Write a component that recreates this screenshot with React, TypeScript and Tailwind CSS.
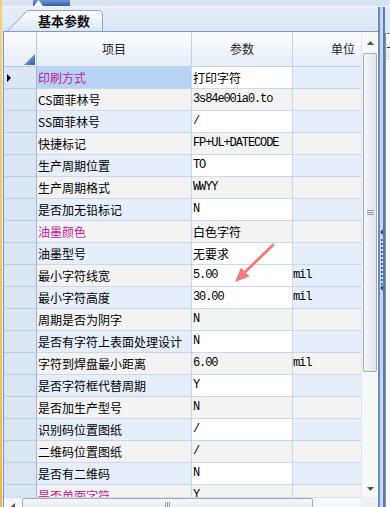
import React from 'react';

type Row = {
  name: string;
  value: string;
  unit?: string;
  mono?: boolean;
  pink?: boolean;
};

const rows: Row[] = [
  { name: '印刷方式', value: '打印字符', pink: true },
  { name: 'CS面菲林号', value: '3s84e00ia0.to', mono: true },
  { name: 'SS面菲林号', value: '/', mono: true },
  { name: '快捷标记', value: 'FP+UL+DATECODE', mono: true },
  { name: '生产周期位置', value: 'TO', mono: true },
  { name: '生产周期格式', value: 'WWYY', mono: true },
  { name: '是否加无铅标记', value: 'N', mono: true },
  { name: '油墨颜色', value: '白色字符', pink: true },
  { name: '油墨型号', value: '无要求' },
  { name: '最小字符线宽', value: '5.00', unit: 'mil', mono: true },
  { name: '最小字符高度', value: '30.00', unit: 'mil', mono: true },
  { name: '周期是否为阴字', value: 'N', mono: true },
  { name: '是否有字符上表面处理设计', value: 'N', mono: true },
  { name: '字符到焊盘最小距离', value: '6.00', unit: 'mil', mono: true },
  { name: '是否字符框代替周期', value: 'Y', mono: true },
  { name: '是否加生产型号', value: 'N', mono: true },
  { name: '识别码位置图纸', value: '/', mono: true },
  { name: '二维码位置图纸', value: '/', mono: true },
  { name: '是否有二维码', value: 'N', mono: true },
  { name: '是否单面字符', value: 'Y', mono: true, pink: true },
];

const cjk = "font-['Noto_Sans_CJK_SC',sans-serif] text-[12px]";
const mono = "font-['Liberation_Mono',monospace] text-[12px] tracking-[-1.1px]";

function GridRow({ row, index }: { row: Row; index: number }) {
  const blue = index % 2 === 0;
  // param cells are white on the blue rows (and on the two width/height rows)
  const paramWhite = blue || index === 9;
  const nameBg = index === 0 ? 'bg-[#b6d3f4]' : blue ? 'bg-[#e6eefa]' : 'bg-[#f3f3f3]';
  const unitBg = blue || index === 9 ? 'bg-[#e6eefa]' : 'bg-[#f3f3f3]';

  return (
    <div className="flex h-[22px] shrink-0">
      <div className="w-[33px] shrink-0 flex items-center pl-[3px] bg-[#dbe5f3] border-r border-b border-r-[#9fb6d9] border-b-[#bccde6]">
        {index === 0 && (
          <svg width="4" height="8" viewBox="0 0 4 8">
            <polygon points="0,0 4,4 0,8" fill="#000" />
          </svg>
        )}
      </div>
      <div
        className={`w-[155px] shrink-0 pl-[1px] leading-[21px] whitespace-nowrap overflow-hidden border-r border-b border-[#c9d8ee] ${cjk} ${nameBg} ${
          row.pink ? 'text-[#c21a9c]' : 'text-black'
        }`}
      >
        {row.name}
      </div>
      <div
        className={`w-[101px] shrink-0 pl-[1px] leading-[21px] whitespace-nowrap overflow-hidden border-r border-b border-[#c9d8ee] text-black ${
          row.mono ? mono : cjk
        } ${paramWhite ? 'bg-white' : 'bg-[#f3f3f3]'}`}
      >
        {row.value}
      </div>
      <div
        className={`w-[100px] shrink-0 leading-[21px] whitespace-nowrap border-b border-[#c9d8ee] text-black ${mono} ${unitBg}`}
      >
        {row.unit}
      </div>
    </div>
  );
}

export default function App() {
  return (
    <div className="relative w-[390px] h-[507px] overflow-hidden flex bg-[#dfe8f5]">
      {/* orange edge of the host window */}
      <div className="w-[2px] shrink-0 bg-gradient-to-b from-[#f7d27a] to-[#efb949]" />

      <div className="flex-1 flex flex-col min-w-0">
        {/* top strip */}
        <div className="h-[7px] shrink-0 flex bg-[#d8e3f1] border-b border-[#eef3fa]">
          <div className="ml-[31px] w-[37px] h-[6px] bg-gradient-to-b from-[#6d96d0] to-[#2f5ea8] flex pl-[1px]">
            <svg width="10" height="6" viewBox="0 0 10 6">
              <polygon points="0,6 4.5,0 9,6" fill="#ffffff" />
            </svg>
          </div>
        </div>

        <div className="flex-1 flex min-h-0">
          {/* main grid side */}
          <div className="w-[376px] shrink-0 flex flex-col">
            {/* tab strip */}
            <div className="h-[24px] shrink-0 flex items-end pl-[5px] bg-gradient-to-b from-[#e7eef8] to-[#dce6f4]">
              <div className="relative w-[96px] h-[21px] flex items-center pl-[31px]">
                <svg className="absolute inset-0" width="96" height="21" viewBox="0 0 96 21">
                  <defs>
                    <linearGradient id="tabg" x1="0" y1="0" x2="0" y2="1">
                      <stop offset="0" stopColor="#ffffff" />
                      <stop offset="1" stopColor="#dbe6f4" />
                    </linearGradient>
                  </defs>
                  <path d="M0.5 21 L20.5 0.5 H91 Q95.5 0.5 95.5 5 V21" fill="url(#tabg)" stroke="#8aa5cc" />
                </svg>
                <span className="relative font-['Noto_Sans_CJK_SC',sans-serif] text-[13px] font-bold leading-none text-[#111]">
                  基本参数
                </span>
              </div>
            </div>

            {/* grid */}
            <div className="ml-[1px] flex-1 flex flex-col border-l border-t border-[#7f9cc8] bg-white">
              <div className="h-[465px] shrink-0 flex">
                <div className="w-[357px] shrink-0 flex flex-col overflow-hidden">
                  {/* header */}
                  <div className="h-[35px] shrink-0 flex bg-gradient-to-b from-[#fbfcfe] to-[#e6edf7]">
                    <div className="w-[33px] shrink-0 flex items-end justify-end pr-[1px] pb-[1px] border-r border-b border-[#b4c8e4]">
                      <svg width="11" height="11" viewBox="0 0 11 11">
                        <defs>
                          <linearGradient id="cg" x1="0" y1="0" x2="1" y2="1">
                            <stop offset="0" stopColor="#8fb2e2" />
                            <stop offset="1" stopColor="#2f62b2" />
                          </linearGradient>
                        </defs>
                        <polygon points="11,0 11,11 0,11" fill="url(#cg)" />
                      </svg>
                    </div>
                    <div className={`w-[155px] shrink-0 flex items-center justify-center border-r border-b border-[#c2d2e8] text-[#222] ${cjk}`}>
                      项目
                    </div>
                    <div className={`w-[101px] shrink-0 flex items-center justify-center border-r border-b border-[#c2d2e8] text-[#222] ${cjk}`}>
                      参数
                    </div>
                    <div className={`w-[100px] shrink-0 flex items-center justify-center border-b border-[#c2d2e8] text-[#222] ${cjk}`}>
                      单位
                    </div>
                  </div>
                  {/* rows */}
                  <div className="flex-1 flex flex-col overflow-hidden">
                    {rows.map((r, i) => (
                      <GridRow key={r.name} row={r} index={i} />
                    ))}
                  </div>
                </div>

                {/* vertical scrollbar */}
                <div className="w-[17px] shrink-0 flex flex-col items-center bg-[#f6f7f9] border-l border-[#e4e8ee]">
                  <div className="h-[21px] shrink-0 flex items-center justify-center">
                    <svg width="7" height="4" viewBox="0 0 7 4">
                      <polygon points="0,4 3.5,0 7,4" fill="#4f5358" />
                    </svg>
                  </div>
                  <div className="h-[319px] w-[14px] shrink-0 flex flex-col items-center justify-center gap-[1px] rounded-[2px] border border-[#a3abb7] bg-gradient-to-r from-[#f4f6f9] to-[#e3e8ef]">
                    <div className="w-[7px] h-px bg-[#8e96a3]" />
                    <div className="w-[7px] h-px bg-[#8e96a3]" />
                    <div className="w-[7px] h-px bg-[#8e96a3]" />
                  </div>
                  <div className="flex-1" />
                  <div className="h-[17px] shrink-0 flex items-center justify-center">
                    <svg width="7" height="4" viewBox="0 0 7 4">
                      <polygon points="0,0 7,0 3.5,4" fill="#4f5358" />
                    </svg>
                  </div>
                </div>
              </div>

              {/* horizontal scrollbar */}
              <div className="h-[17px] shrink-0 flex">
                <div className="w-[357px] shrink-0 flex items-start bg-[#f6f7f9] border-t border-[#d5dbe3]">
                  <div className="w-[17px] h-[16px] shrink-0 flex items-center justify-center pl-[1px]">
                    <svg width="4" height="7" viewBox="0 0 4 7">
                      <polygon points="4,0 4,7 0,3.5" fill="#4f5358" />
                    </svg>
                  </div>
                  <div className="ml-[1px] w-[291px] h-[14px] shrink-0 flex items-center justify-center gap-[1px] rounded-[2px] border border-[#a3abb7] bg-gradient-to-b from-[#f4f6f9] to-[#e3e8ef]">
                    <div className="w-px h-[7px] bg-[#8e96a3]" />
                    <div className="w-px h-[7px] bg-[#8e96a3]" />
                    <div className="w-px h-[7px] bg-[#8e96a3]" />
                  </div>
                  <div className="flex-1" />
                  <div className="w-[17px] h-[16px] shrink-0 flex items-end justify-center">
                    <svg width="4" height="7" viewBox="0 0 4 7">
                      <polygon points="0,0 4,3.5 0,7" fill="#4f5358" />
                    </svg>
                  </div>
                </div>
                <div className="w-[17px] shrink-0 bg-[#eef0f3]" />
              </div>
            </div>
          </div>

          {/* splitter */}
          <div className="w-[7px] shrink-0 flex flex-col items-center bg-[#c7d7ed] border-l-2 border-r-2 border-l-[#6b8cc0] border-r-[#5a7cb4]">
            <svg className="mt-[222px]" width="3" height="62" viewBox="0 0 3 62">
              <polygon points="3,0 3,6 0,3" fill="#2d4f86" />
              {Array.from({ length: 12 }).map((_, k) => (
                <rect key={k} x="1" y={10 + k * 4} width="1.5" height="2" fill="#2d4f86" />
              ))}
              <polygon points="3,56 3,62 0,59" fill="#2d4f86" />
            </svg>
          </div>

          {/* neighbouring panel */}
          <div className="flex-1 flex flex-col pt-[26px]">
            <div className="h-[27px] shrink-0 flex items-center pl-[1px] border-t border-l border-[#8f8f8f] bg-gradient-to-b from-[#fbfbfb] to-[#e6e6e6]">
              <div className="w-[3px] h-px bg-[#333]" />
            </div>
            <div className="flex-1 bg-white border-l border-[#8f8f8f]" />
          </div>
        </div>
      </div>

      {/* red annotation arrow */}
      <svg className="absolute inset-0 pointer-events-none" width="390" height="507" viewBox="0 0 390 507">
        <line x1="273" y1="245" x2="244" y2="273" stroke="#ef7b7b" strokeWidth="3" strokeLinecap="round" />
        <polygon points="235,282 249.5,276.5 241,267.5" fill="#ef7b7b" />
      </svg>
    </div>
  );
}
